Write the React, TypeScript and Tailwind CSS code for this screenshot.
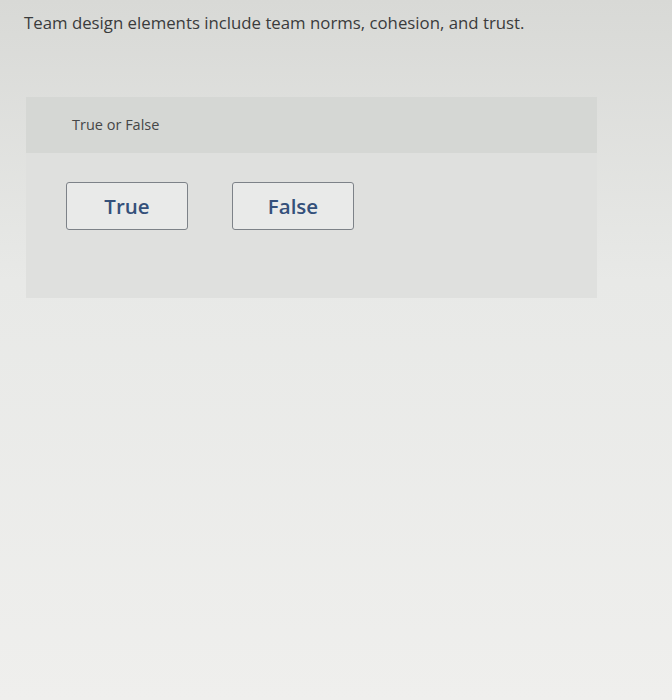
import React from "react";

export default function App() {
  return (
    <div className="w-[672px] h-[700px] bg-linear-to-b from-[#d8d9d6] via-[#e8e9e7] via-40% to-[#efefed] font-['Open_Sans',sans-serif] overflow-hidden">
      <div className="pt-[12px] pl-[24px] text-[16.8px] leading-[22px] text-[#3a3b3c]">
        Team design elements include team norms, cohesion, and trust.
      </div>
      <div className="ml-[26px] mt-[63px] w-[571px] h-[201px] bg-[#dfe0de] flex flex-col">
        <div className="h-[56px] bg-[#d5d7d4] pl-[46px] flex items-center text-[14.5px] text-[#454647]">
          True or False
        </div>
        <div className="flex gap-[44px] pl-[40px] pt-[29px]">
          <button className="w-[122px] h-[48px] border border-[#7d8288] rounded-[3px] bg-[#e9eae9] text-[20.5px] font-semibold text-[#34507a]">
            True
          </button>
          <button className="w-[122px] h-[48px] border border-[#7d8288] rounded-[3px] bg-[#e9eae9] text-[20.5px] font-semibold text-[#34507a]">
            False
          </button>
        </div>
      </div>
    </div>
  );
}
